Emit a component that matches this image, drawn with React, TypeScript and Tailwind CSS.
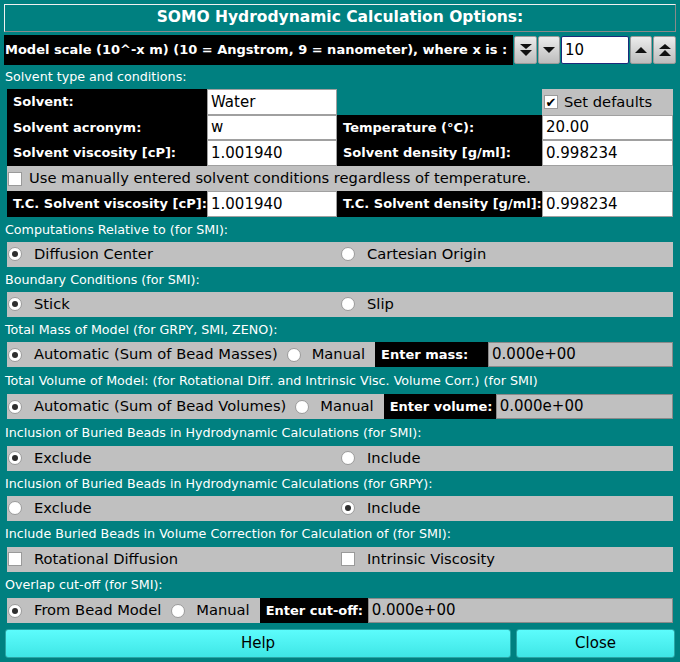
import React from "react";

function Radio({ checked }: { checked?: boolean }) {
  return (
    <span className="w-[14px] h-[14px] rounded-full bg-white border border-[#9a9a9a] flex items-center justify-center shrink-0">
      {checked && <span className="w-[6px] h-[6px] rounded-full bg-[#2e2e2e]" />}
    </span>
  );
}

function Check({ checked }: { checked?: boolean }) {
  return (
    <span className="w-[14px] h-[14px] bg-white border border-[#9a9a9a] flex items-center justify-center shrink-0 text-[13px] leading-none font-bold text-black">
      {checked ? "✔" : ""}
    </span>
  );
}

function SectionLabel({ children, h = "h-[25px]" }: { children: React.ReactNode; h?: string }) {
  return <div className={`${h} flex items-center pl-[5px] text-[12.7px] text-white`}>{children}</div>;
}

function GrayRow({ children }: { children: React.ReactNode }) {
  return <div className="mx-[7px] h-[25px] bg-[#c0c0c0] flex items-center text-[14.7px] text-black">{children}</div>;
}

function RadioPair({ a, b, sel }: { a: string; b: string; sel: 0 | 1 }) {
  return (
    <GrayRow>
      <div className="grid grid-cols-2 w-full">
        <div className="flex items-center gap-[12px] pl-[1px]">
          <Radio checked={sel === 0} />
          <span>{a}</span>
        </div>
        <div className="flex items-center gap-[12px] pl-[1px]">
          <Radio checked={sel === 1} />
          <span>{b}</span>
        </div>
      </div>
    </GrayRow>
  );
}

function DoubleDown() {
  return (
    <svg width="14" height="14" viewBox="0 0 14 14">
      <polygon points="1,1 13,1 7,6" fill="#111" />
      <polygon points="1,7 13,7 7,13" fill="#111" />
    </svg>
  );
}
function Down() {
  return (
    <svg width="14" height="8" viewBox="0 0 14 8">
      <polygon points="1,1 13,1 7,7" fill="#111" />
    </svg>
  );
}
function Up() {
  return (
    <svg width="14" height="8" viewBox="0 0 14 8">
      <polygon points="1,7 13,7 7,1" fill="#111" />
    </svg>
  );
}
function DoubleUp() {
  return (
    <svg width="14" height="14" viewBox="0 0 14 14">
      <polygon points="1,6 13,6 7,1" fill="#111" />
      <polygon points="1,13 13,13 7,7" fill="#111" />
    </svg>
  );
}

function SpinBtn({ children, w }: { children: React.ReactNode; w: string }) {
  return (
    <div className={`${w} h-full flex items-center justify-center bg-gradient-to-b from-[#ececec] to-[#bdbdbd] border border-[#9a9a9a] rounded-[2px]`}>
      {children}
    </div>
  );
}

function Input({ value }: { value: string }) {
  return (
    <div className="h-full bg-white border border-[#a0a0a0] flex items-center pl-[3px] text-[15px] text-black">
      {value}
    </div>
  );
}

function BlackLabel({ children }: { children: React.ReactNode }) {
  return <div className="h-full bg-black text-white font-bold text-[13px] flex items-center pl-[6px] whitespace-nowrap">{children}</div>;
}

export default function App() {
  return (
    <div className="w-[680px] h-[662px] bg-[#008080] font-['DejaVu_Sans',sans-serif] flex flex-col overflow-hidden">
      {/* Title */}
      <div className="mt-[4px] mx-[4px] h-[28px] border border-t-[#f0f0f0] border-l-[#f0f0f0] border-b-[#8a8a8a] border-r-[#8a8a8a] flex items-center justify-center text-white font-bold text-[15.5px]">
        SOMO Hydrodynamic Calculation Options:
      </div>

      {/* Model scale */}
      <div className="mt-[3px] mx-[4px] h-[30px] flex items-stretch">
        <div className="w-[510px] bg-black text-white font-bold text-[13px] flex items-center pl-[1px] whitespace-nowrap">
          Model scale (10^-x m) (10 = Angstrom, 9 = nanometer), where x is :
        </div>
        <div className="flex items-stretch gap-[1px] ml-[1px] py-[1px] flex-1">
          <SpinBtn w="w-[23px]"><DoubleDown /></SpinBtn>
          <SpinBtn w="w-[22px]"><Down /></SpinBtn>
          <div className="w-[68px] h-full bg-white border border-[#1d2a7a] rounded-[2px] flex items-center pl-[3px] text-[15px] text-black">10</div>
          <SpinBtn w="w-[22px]"><Up /></SpinBtn>
          <SpinBtn w="w-[23px]"><DoubleUp /></SpinBtn>
        </div>
      </div>

      <SectionLabel h="h-[24px]">Solvent type and conditions:</SectionLabel>

      {/* Solvent grid */}
      <div className="mx-[7px] grid grid-cols-[200px_130px_205px_131px] grid-rows-[26px_25px_26px_25px_26px]">
        <BlackLabel>Solvent:</BlackLabel>
        <Input value="Water" />
        <div className="h-full" />
        <div className="h-full bg-[#c0c0c0] flex items-center gap-[6px] pl-[2px] text-[14.7px] text-black">
          <Check checked />
          <span>Set defaults</span>
        </div>

        <BlackLabel>Solvent acronym:</BlackLabel>
        <Input value="w" />
        <BlackLabel>Temperature (°C):</BlackLabel>
        <Input value="20.00" />

        <BlackLabel>Solvent viscosity [cP]:</BlackLabel>
        <Input value="1.001940" />
        <BlackLabel>Solvent density [g/ml]:</BlackLabel>
        <Input value="0.998234" />

        <div className="col-span-4 h-full bg-[#c0c0c0] flex items-center gap-[7px] pl-[1px] text-[14.7px] text-black">
          <Check />
          <span>Use manually entered solvent conditions regardless of temperature.</span>
        </div>

        <BlackLabel>T.C. Solvent viscosity [cP]:</BlackLabel>
        <Input value="1.001940" />
        <BlackLabel>T.C. Solvent density [g/ml]:</BlackLabel>
        <Input value="0.998234" />
      </div>

      <SectionLabel>Computations Relative to (for SMI):</SectionLabel>
      <RadioPair a="Diffusion Center" b="Cartesian Origin" sel={0} />

      <SectionLabel>Boundary Conditions (for SMI):</SectionLabel>
      <RadioPair a="Stick" b="Slip" sel={0} />

      <SectionLabel>Total Mass of Model (for GRPY, SMI, ZENO):</SectionLabel>
      <GrayRow>
        <div className="flex items-center h-full w-full pl-[1px]">
          <Radio checked />
          <span className="ml-[12px]">Automatic (Sum of Bead Masses)</span>
          <span className="ml-[9px]"><Radio /></span>
          <span className="ml-[11px]">Manual</span>
          <div className="ml-[10px] h-full w-[113px]"><BlackLabel>Enter mass:</BlackLabel></div>
          <div className="flex-1 h-full bg-[#c0c0c0] border border-[#8a8a8a] flex items-center pl-[3px] text-[15px]">0.000e+00</div>
        </div>
      </GrayRow>

      <SectionLabel h="h-[27px]">Total Volume of Model: (for Rotational Diff. and Intrinsic Visc. Volume Corr.) (for SMI)</SectionLabel>
      <GrayRow>
        <div className="flex items-center h-full w-full pl-[1px]">
          <Radio checked />
          <span className="ml-[12px]">Automatic (Sum of Bead Volumes)</span>
          <span className="ml-[9px]"><Radio /></span>
          <span className="ml-[11px]">Manual</span>
          <div className="ml-[10px] h-full w-[112px]"><BlackLabel>Enter volume:</BlackLabel></div>
          <div className="flex-1 h-full bg-[#c0c0c0] border border-[#8a8a8a] flex items-center pl-[3px] text-[15px]">0.000e+00</div>
        </div>
      </GrayRow>

      <SectionLabel h="h-[27px]">Inclusion of Buried Beads in Hydrodynamic Calculations (for SMI):</SectionLabel>
      <RadioPair a="Exclude" b="Include" sel={0} />

      <SectionLabel>Inclusion of Buried Beads in Hydrodynamic Calculations (for GRPY):</SectionLabel>
      <RadioPair a="Exclude" b="Include" sel={1} />

      <SectionLabel h="h-[26px]">Include Buried Beads in Volume Correction for Calculation of (for SMI):</SectionLabel>
      <GrayRow>
        <div className="grid grid-cols-2 w-full">
          <div className="flex items-center gap-[12px] pl-[1px]">
            <Check />
            <span>Rotational Diffusion</span>
          </div>
          <div className="flex items-center gap-[12px] pl-[1px]">
            <Check />
            <span>Intrinsic Viscosity</span>
          </div>
        </div>
      </GrayRow>

      <SectionLabel h="h-[26px]">Overlap cut-off (for SMI):</SectionLabel>
      <GrayRow>
        <div className="flex items-center h-full w-full pl-[1px]">
          <Radio checked />
          <span className="ml-[12px]">From Bead Model</span>
          <span className="ml-[10px]"><Radio /></span>
          <span className="ml-[11px]">Manual</span>
          <div className="ml-[10px] h-full w-[108px]"><BlackLabel>Enter cut-off:</BlackLabel></div>
          <div className="flex-1 h-full bg-[#c0c0c0] border border-[#8a8a8a] flex items-center pl-[3px] text-[15px]">0.000e+00</div>
        </div>
      </GrayRow>

      <div className="mt-[6px] mx-[5px] h-[29px] flex gap-[5px]">
        <div className="flex-1 rounded-[3px] border border-[#2aa5a5] bg-gradient-to-b from-[#5cfcfc] to-[#3ee6e6] flex items-center justify-center text-[15px] text-black">Help</div>
        <div className="w-[159px] rounded-[3px] border border-[#2aa5a5] bg-gradient-to-b from-[#5cfcfc] to-[#3ee6e6] flex items-center justify-center text-[15px] text-black">Close</div>
      </div>
    </div>
  );
}
